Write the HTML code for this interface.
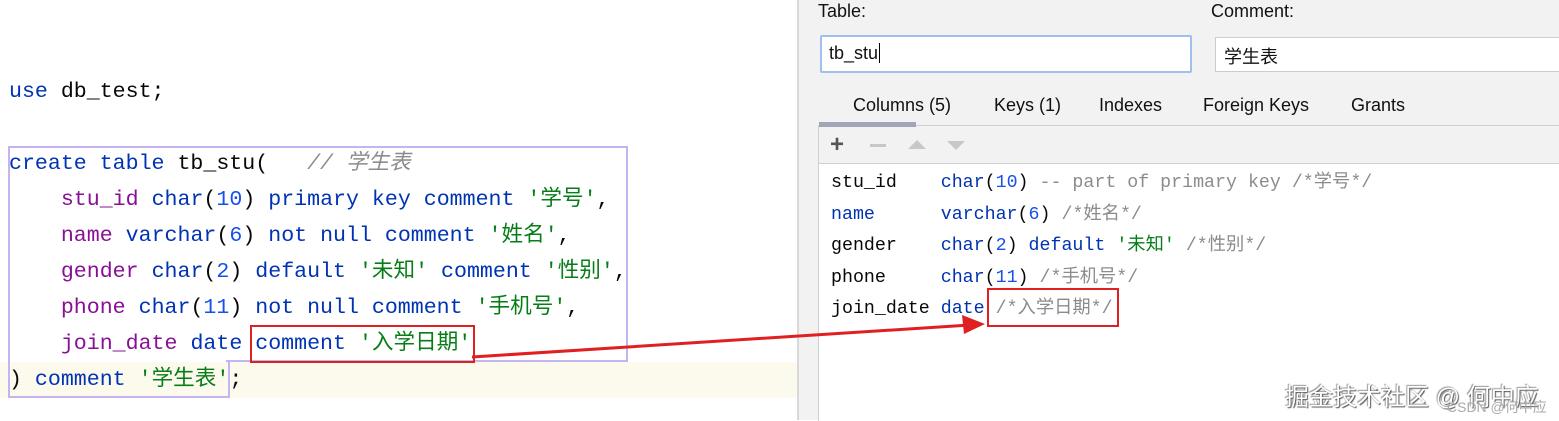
<!DOCTYPE html>
<html><head><meta charset="utf-8"><style>
body{margin:0;width:1559px;height:420px;overflow:hidden;background:#fff;position:relative;font-family:"Liberation Sans","Noto Sans CJK SC",sans-serif}
.a{position:absolute}
.code{font-family:"Liberation Mono","Noto Sans CJK SC",monospace;font-size:21.6px;white-space:pre;line-height:36px}
.k{color:#0033b3}.p{color:#871094}.s{color:#067d17}.c{color:#8c8c8c;font-style:italic}.n{color:#1750eb}
.rc{font-family:"Liberation Mono","Noto Sans CJK SC",monospace;font-size:18.3px;white-space:pre;line-height:31.5px;color:#080808}
.g{color:#8c8c8c}
</style></head><body>
<div class="a" style="left:0;top:362px;width:797px;height:36px;background:#fcfaed"></div>
<div class="a code" style="left:9px;top:74px;color:#080808"><span class="k">use</span> db_test;

<span class="k">create table</span> tb_stu(   <span class="c">// 学生表</span>
    <span class="p">stu_id</span> <span class="k">char</span>(<span class="n">10</span>) <span class="k">primary key comment</span> <span class="s">'学号'</span>,
    <span class="p">name</span> <span class="k">varchar</span>(<span class="n">6</span>) <span class="k">not null comment</span> <span class="s">'姓名'</span>,
    <span class="p">gender</span> <span class="k">char</span>(<span class="n">2</span>) <span class="k">default</span> <span class="s">'未知'</span> <span class="k">comment</span> <span class="s">'性别'</span>,
    <span class="p">phone</span> <span class="k">char</span>(<span class="n">11</span>) <span class="k">not null comment</span> <span class="s">'手机号'</span>,
    <span class="p">join_date</span> <span class="k">date</span> <span class="k">comment</span> <span class="s">'入学日期'</span>
) <span class="k">comment</span> <span class="s">'学生表'</span>;</div>
<div class="a" style="left:8px;top:146px;width:616px;height:214px;border:2px solid #c4b5f0;border-bottom:none"></div>
<div class="a" style="left:8px;top:360px;width:218px;height:36px;border:2px solid #c4b5f0;border-top:none"></div>
<div class="a" style="left:226px;top:360px;width:400px;height:2px;background:#c4b5f0"></div>
<div class="a" style="left:250px;top:325px;width:221px;height:34px;border:2px solid #e02020"></div>

<div class="a" style="left:797px;top:0;width:762px;height:420px;background:#f2f2f2;border-left:2px solid #d8d8d8"></div>
<div class="a" style="left:818px;top:1px;font-size:18px;color:#111">Table:</div>
<div class="a" style="left:1211px;top:1px;font-size:18px;color:#111">Comment:</div>
<div class="a" style="left:820px;top:35px;width:368px;height:34px;background:#fff;border:2px solid #9ebff0;border-radius:2px"></div>
<div class="a" style="left:829px;top:43px;font-size:18px;color:#111">tb_stu<span style="border-left:1.5px solid #000;margin-left:1px"></span></div>
<div class="a" style="left:1215px;top:37px;width:344px;height:33px;background:#fff;border:1px solid #ccc;border-right:none"></div>
<div class="a" style="left:1224px;top:43px;font-size:18px;color:#111">学生表</div>
<div class="a" style="left:853px;top:95px;font-size:18px;color:#111;white-space:pre">Columns (5)</div>
<div class="a" style="left:994px;top:95px;font-size:18px;color:#111">Keys (1)</div>
<div class="a" style="left:1099px;top:95px;font-size:18px;color:#111">Indexes</div>
<div class="a" style="left:1203px;top:95px;font-size:18px;color:#111">Foreign Keys</div>
<div class="a" style="left:1351px;top:95px;font-size:18px;color:#111">Grants</div>
<div class="a" style="left:818px;top:125px;width:741px;height:295px;background:#fff;border-left:1px solid #d0d0d0;border-top:1px solid #d0d0d0"></div>
<div class="a" style="left:819px;top:126px;width:740px;height:37px;background:#f2f2f2;border-bottom:1px solid #d0d0d0"></div>
<div class="a" style="left:819px;top:122px;width:97px;height:5px;background:#a0a8b8"></div>
<div class="a" style="left:830px;top:131px;font-size:24px;color:#555;font-weight:bold">+</div>
<div class="a" style="left:870px;top:144px;width:16px;height:3px;background:#c8c8c8"></div>
<div class="a" style="left:908px;top:140px;width:0;height:0;border-left:9px solid transparent;border-right:9px solid transparent;border-bottom:9px solid #c8c8c8"></div>
<div class="a" style="left:947px;top:141px;width:0;height:0;border-left:9px solid transparent;border-right:9px solid transparent;border-top:9px solid #c8c8c8"></div>
<div class="a rc" style="left:831px;top:168px">stu_id    <span class="k">char</span>(<span class="n">10</span>) <span class="g">-- part of primary key /*学号*/</span>
<span class="k">name</span>      <span class="k">varchar</span>(<span class="n">6</span>) <span class="g">/*姓名*/</span>
gender    <span class="k">char</span>(<span class="n">2</span>) <span class="k">default</span> <span class="s">'未知'</span> <span class="g">/*性别*/</span>
phone     <span class="k">char</span>(<span class="n">11</span>) <span class="g">/*手机号*/</span>
join_date <span class="k">date</span> <span class="g">/*入学日期*/</span></div>
<div class="a" style="left:987px;top:288px;width:128px;height:35px;border:2px solid #e02020"></div>
<svg class="a" style="left:0;top:0" width="1559" height="420"><line x1="472" y1="357" x2="970" y2="325" stroke="#e02020" stroke-width="3"/><polygon points="985,324 962,315 964,334" fill="#e02020"/></svg>
<div class="a" style="left:1285px;top:377px;font-size:24px;color:#fff;text-shadow:1px 1px 1px #555,-1px -1px 1px #999;white-space:pre">掘金技术社区 @ 何中应</div>
<div class="a" style="left:1447px;top:397px;font-size:14px;color:#aaa">CSDN @何中应</div>
</body></html>
